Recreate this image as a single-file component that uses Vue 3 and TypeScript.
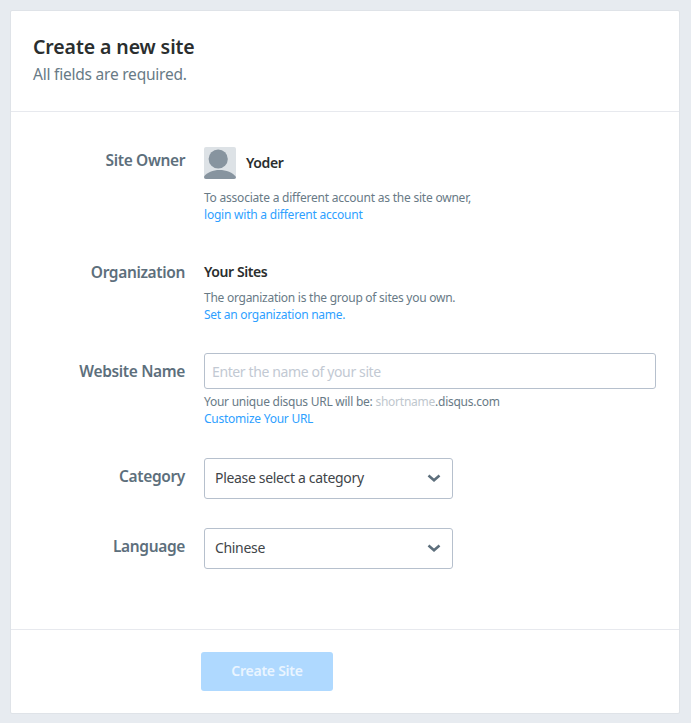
<script setup lang="ts">
const avatarLabel = 'Yoder'
</script>

<template>
  <div class="page">
    <main class="card">
      <header class="head">
        <h1>Create a new site</h1>
        <p>All fields are required.</p>
      </header>
      <section class="form">
        <div class="row owner">
          <div class="label">Site Owner</div>
          <div class="field">
            <div class="user">
              <svg class="avatar" width="32" height="32" viewBox="0 0 32 32">
                <rect width="32" height="32" fill="#dde2e6" />
                <circle cx="14.2" cy="12" r="9.6" fill="#87949f" />
                <path d="M0 32v-2.5C3 25.5 9 23 15.5 23S29 25.5 32 30v2z" fill="#87949f" />
              </svg>
              <strong>{{ avatarLabel }}</strong>
            </div>
            <p class="help first">To associate a different account as the site owner,<br /><a>login with a different account</a></p>
          </div>
        </div>
        <div class="row org">
          <div class="label">Organization</div>
          <div class="field">
            <strong class="org-name">Your Sites</strong>
            <p class="help org-help">The organization is the group of sites you own.<br /><a>Set an organization name.</a></p>
          </div>
        </div>
        <div class="row site">
          <div class="label tall">Website Name</div>
          <div class="field">
            <input class="input" type="text" placeholder="Enter the name of your site" />
            <p class="help url-help">Your unique disqus URL will be: <span class="muted">shortname</span>.disqus.com<br /><a>Customize Your URL</a></p>
          </div>
        </div>
        <div class="row cat">
          <div class="label tall">Category</div>
          <div class="field">
            <div class="select">
              <span>Please select a category</span>
              <svg width="14" height="9" viewBox="0 0 14 9"><path d="M1.5 1.5L7 6.2l5.5-4.7" fill="none" stroke="#5d6f7c" stroke-width="2.6" /></svg>
            </div>
          </div>
        </div>
        <div class="row lang">
          <div class="label tall">Language</div>
          <div class="field">
            <div class="select">
              <span>Chinese</span>
              <svg width="14" height="9" viewBox="0 0 14 9"><path d="M1.5 1.5L7 6.2l5.5-4.7" fill="none" stroke="#5d6f7c" stroke-width="2.6" /></svg>
            </div>
          </div>
        </div>
      </section>
      <footer class="foot">
        <button class="submit" type="button">Create Site</button>
      </footer>
    </main>
  </div>
</template>

<style>
html, body { margin: 0; background: #e7ebf0; }
</style>

<style scoped>
.page {
  padding: 10px;
  font-family: "Noto Sans", sans-serif;
  color: #2a2e2e;
  box-sizing: border-box;
  height: 723px;
}
.card {
  width: 670px;
  height: 704px;
  box-sizing: border-box;
  background: #fff;
  border: 1px solid #dfe3e8;
  border-radius: 2px;
  display: flex;
  flex-direction: column;
}
.head {
  height: 101px;
  box-sizing: border-box;
  padding: 23px 22px 0;
  border-bottom: 1px solid #e7e9ee;
}
h1 {
  margin: 0;
  font-size: 19.5px;
  line-height: 26px;
  font-weight: 600;
  letter-spacing: -0.1px;
}
.head p {
  margin: 2px 0 0;
  font-size: 15.5px;
  line-height: 24px;
  color: #687a86;
  letter-spacing: -0.22px;
}
.form { flex: 1; padding-top: 35px; }
.row { display: flex; }
.owner { height: 112px; }
.org { height: 94px; }
.site { height: 105px; }
.cat { height: 70px; }
.label {
  width: 174px;
  flex: none;
  text-align: right;
  font-size: 15.5px;
  line-height: 26px;
  font-weight: 600;
  color: #5d6f7c;
  letter-spacing: -0.36px;
}
.label.tall { line-height: 36px; }
.field { margin-left: 19px; min-width: 0; }
.user { display: flex; align-items: center; gap: 10px; height: 32px; }
.user strong { position: relative; top: -1px; }
.avatar { display: block; border-radius: 2px; }
strong { font-size: 14px; font-weight: 600; letter-spacing: -0.42px; }
.org-name { display: block; line-height: 26px; }
.help {
  margin: 4px 0 0;
  font-size: 12px;
  line-height: 17px;
  color: #687a86;
  letter-spacing: -0.22px;
  white-space: nowrap;
}
.help.first { margin-top: 10px; }
.org-help { letter-spacing: -0.26px; }
.url-help { letter-spacing: -0.25px; }
a { color: #2e9fff; }
.muted { color: #c0c7ce; }
.input {
  display: block;
  width: 452px;
  height: 36px;
  box-sizing: border-box;
  padding: 0 7px;
  border: 1px solid #b6c0cd;
  border-radius: 3px;
  font: 14px "Noto Sans", sans-serif;
  letter-spacing: -0.38px;
  outline: none;
}
.input::placeholder { color: #c2c9d3; opacity: 1; }
.select {
  width: 249px;
  height: 41px;
  box-sizing: border-box;
  padding: 0 11px 2px 10px;
  border: 1px solid #b6c0cd;
  border-radius: 3px;
  display: flex;
  align-items: center;
  justify-content: space-between;
  font-size: 14px;
  letter-spacing: -0.33px;
  color: #3f4549;
}
.select svg { position: relative; top: 1px; }
.foot {
  height: 84px;
  box-sizing: border-box;
  border-top: 1px solid #e7e9ee;
  padding: 22px 0 0 190px;
}
.submit {
  display: block;
  width: 132px;
  height: 39px;
  padding: 0 0 2px;
  border: 0;
  border-radius: 3px;
  background: #afd9ff;
  color: #eaf5ff;
  font: 600 14px "Noto Sans", sans-serif;
  letter-spacing: -0.25px;
}
</style>
